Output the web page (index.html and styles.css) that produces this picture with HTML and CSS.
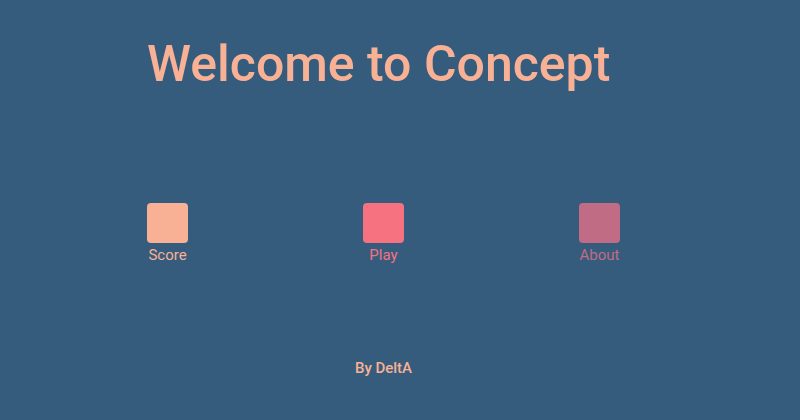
FILE: index.html
```html
<!DOCTYPE html>
<html>
<head>
<meta charset="utf-8">
<link rel="stylesheet" href="styles.css">
</head>
<body>
<div class="wrap">
  <h1 class="title">Welcome to Concept</h1>
  <div class="menu">
    <div class="item score"><div class="box"></div><span class="label">Score</span></div>
    <div class="item play"><div class="box"></div><span class="label">Play</span></div>
    <div class="item about"><div class="box"></div><span class="label">About</span></div>
  </div>
  <div class="footer">By DeltA</div>
</div>
</body>
</html>
```
FILE: styles.css
```css
html, body {
  margin: 0;
  padding: 0;
  height: 100%;
  background: #355c7d;
  font-family: Roboto, "Liberation Sans", sans-serif;
}
.wrap {
  width: 473px;
  margin-left: 147px;
  display: flex;
  flex-direction: column;
}
.title {
  margin: 34px 0 0 0;
  font-size: 50px;
  font-weight: 500;
  line-height: 60px;
  color: #f8b195;
  white-space: nowrap;
}
.menu {
  margin-top: 109px;
  display: flex;
  justify-content: space-between;
}
.item {
  width: 41px;
  display: flex;
  flex-direction: column;
  align-items: center;
}
.box {
  width: 41px;
  height: 40px;
  border-radius: 4px;
}
.label {
  margin-top: 3px;
  font-size: 15px;
  line-height: 18px;
  white-space: nowrap;
}
.score .box { background: #f8b195; }
.score .label { color: #f8b195; }
.play .box { background: #f67280; }
.play .label { color: #f67280; }
.about .box { background: #c06c84; }
.about .label { color: #c06c84; }
.footer {
  margin-top: 95px;
  text-align: center;
  font-size: 15px;
  font-weight: 500;
  line-height: 18px;
  color: #f8b195;
}
```
